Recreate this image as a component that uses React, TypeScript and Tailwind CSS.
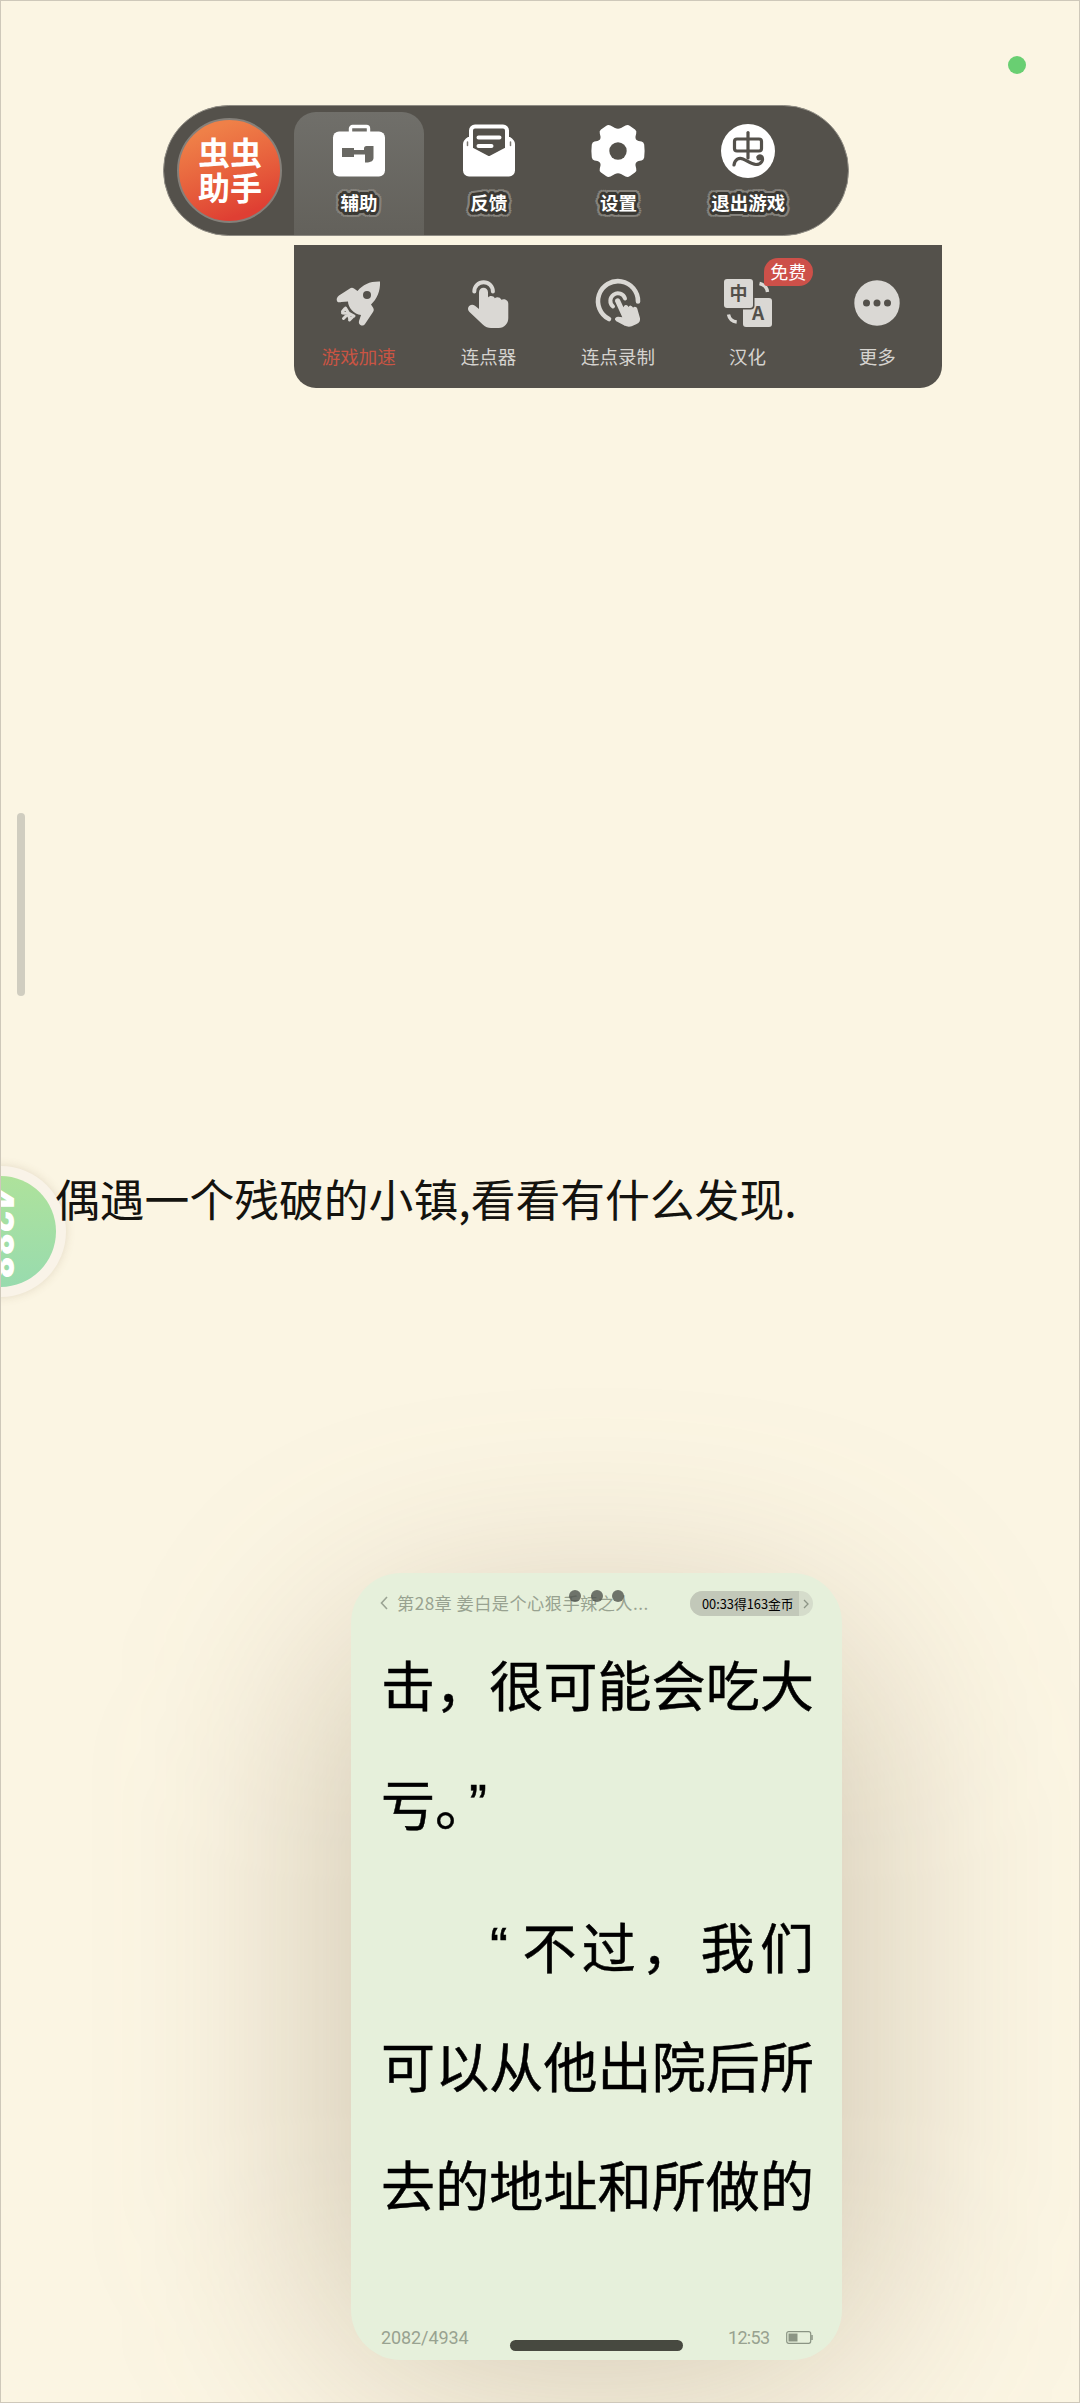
import type { ReactNode } from "react";

function ToolboxIcon() {
  return (
    <svg viewBox="0 0 54 54" className="h-[54px] w-[54px]">
      <path d="M18.500 9V4.500a2 2 0 0 1 2-2h14a2 2 0 0 1 2 2V9" fill="none" stroke="#fff" strokeWidth="3.400" />
      <rect x="1" y="7.500" width="52" height="45" rx="6" fill="#fff" />
      <path d="M10 24h12v2h10v-1.500a2.500 2.500 0 0 1 2.500-2.500H41.500v12c0 3-3 4.500-7.500 4.500h-1v-8H22v2.500H10z" fill="#696863" />
    </svg>
  );
}

function FeedbackIcon() {
  return (
    <svg viewBox="0 0 54 54" className="h-[54px] w-[54px]">
      <path d="M1 20c0-3 2-5 5-7h42c3 2 5 4 5 7v26.500a6 6 0 0 1-6 6H7a6 6 0 0 1-6-6z" fill="#fff" />
      <path d="M9 25V6.500a4 4 0 0 1 4-4h28a4 4 0 0 1 4 4V25l-18 9.500z" fill="#54514b" stroke="#fff" strokeWidth="4" strokeLinejoin="round" />
      <path d="M16.500 13.500h21M16.500 22h13" stroke="#fff" strokeWidth="4" strokeLinecap="round" />
      <path d="M5.500 18v3.500M48.500 18v3.500" stroke="#7b7872" strokeWidth="1.500" strokeLinecap="round" />
    </svg>
  );
}

function GearIcon() {
  return (
    <svg viewBox="0 0 54 54" className="h-[54px] w-[54px]">
      <path
        d="M15 2q2-1.500 4.500-.5L24 4q3 1.300 6 0l4.500-2.500Q37 .5 39 2l5 3.500q2 1.500 1.200 4l-.7 3q-.5 3.500 3 4.500l3 .6q2.200.7 2.700 3 .8 6.400 0 12.800-.5 2.300-2.700 3l-3 .6q-3.500 1-3 4.500l.7 3q.8 2.500-1.200 4L39 52q-2 1.500-4.500.5L30 50q-3-1.300-6 0l-4.500 2.500Q17 53.500 15 52l-5-3.500q-2-1.500-1.200-4l.7-3q.5-3.500-3-4.500l-3-.6q-2.200-.7-2.700-3-.8-6.400 0-12.800.5-2.300 2.700-3l3-.6q3.500-1 3-4.500l-.7-3Q8 7 10 5.500z"
        fill="#fff"
      />
      <circle cx="27" cy="27" r="8.700" fill="#54514b" />
    </svg>
  );
}

function ExitIcon() {
  return (
    <svg viewBox="0 0 54 54" className="h-[54px] w-[54px]">
      <circle cx="27" cy="27" r="27" fill="#fff" />
      <g fill="none" stroke="#54514b" strokeWidth="3.200" strokeLinecap="round" strokeLinejoin="round">
        <rect x="13.500" y="15" width="27" height="12" rx="2.500" />
        <path d="M27 8.500V34" />
        <path d="M13 41c1-6 5-7.500 9-6s8 5.500 13 5.500c5.500 0 7.500-4.500 6-7.500-1-1.500-3-1.500-4 0" />
      </g>
      <circle cx="38" cy="34" r="2.500" fill="#54514b" />
    </svg>
  );
}

function RocketIcon() {
  return (
    <svg viewBox="0 0 48 48" className="h-12 w-12">
      <path
        d="M45 2.500c-10-.3-17 3-22.500 9.500L19 9.500c-1.500-1-3-.8-4.500.2L4 16.500C2 18 1 20.500 2.200 22.500c1 1.200 3 .8 4.300.5l6.500-.5c0 6 6 13 13 13.500L24 42c-.5 2 .3 4 2.300 4.500 1.500.4 2.700-.3 3.700-1.500l8-12c1-1.500 1-3 0-4.500l-2-3C42 20 45.500 12 45 2.500z"
        fill="#dad8d4"
      />
      <circle cx="32" cy="16" r="4" fill="#54514b" />
      <path
        d="M10.500 29l3 5 5.500 3M10 29.500l-2.500 3M7.500 34l5.500.5 2 6M8.500 39.500l4-4M18 37.500L14.500 41"
        fill="none"
        stroke="#dad8d4"
        strokeWidth="3"
        strokeLinecap="round"
        strokeLinejoin="round"
      />
    </svg>
  );
}

function TapIcon() {
  return (
    <svg viewBox="0 0 48 54" className="ml-0.5 h-[54px] w-12">
      <path d="M9.300 15.500a9.300 9.300 0 1 1 18.600 0" fill="none" stroke="#dad8d4" strokeWidth="4" strokeLinecap="round" />
      <path
        d="M14 16.300a4.500 4.500 0 0 1 9 0V21.500c1.500-2.300 5.800-2 6.800.8 1.800-1.700 5.500-1.200 6.500 1.500 2.500-1.500 7-.3 7 4V42c0 5.500-4 10-9.500 10H26c-3 0-5.500-1-8-3.200L4.500 36c-4-4 1-9.500 5.500-6.200l4 3.200z"
        fill="#dad8d4"
      />
    </svg>
  );
}

function RecordIcon() {
  return (
    <svg viewBox="0 0 54 54" className="h-[54px] w-[54px]">
      <g fill="none" stroke="#dad8d4" strokeLinecap="round">
        <path d="M18 43A20 20 0 1 1 47 25.500" strokeWidth="4.600" />
        <path d="M22 30.500A7.500 7.500 0 1 1 34 22.500" strokeWidth="4" />
      </g>
      <path
        d="M23.500 26c-1.500-4 4.500-6.500 6.200-2.500l2.800 6c1-1.800 4-1.500 5 .2 1.300-1.500 3.800-1 4.800.8 1.500-1.200 4-.3 4.700 1.700L49.500 41c1.500 4-.5 6.500-4 8l-4 1.800c-3 1.200-5.500 1-8.500-.5L25 46c-4-2.500-1-6.500 2.500-6l2.500.3z"
        fill="#dad8d4"
        stroke="#54514b"
        strokeWidth="1.600"
      />
    </svg>
  );
}

function TranslateIcon() {
  return (
    <svg viewBox="0 0 50 50" className="h-[50px] w-[50px]">
      <rect x="20" y="20" width="29" height="29" rx="3" fill="#dad8d4" />
      <rect x="0" y="0" width="31.500" height="31.500" rx="4" fill="#54514b" />
      <rect x="1" y="1" width="29" height="29" rx="3" fill="#dad8d4" />
      <path d="M36.500 5.500c4.500 1 7.500 4 8 8.500M5.500 36.500c.8 4 3.700 7 8.200 7.500" fill="none" stroke="#dad8d4" strokeWidth="3.400" />
      <text x="15.500" y="22" textAnchor="middle" fontSize="18" fontWeight="700" fill="#54514b" fontFamily="Noto Sans CJK SC, sans-serif">中</text>
      <text x="35" y="42" textAnchor="middle" fontSize="19" fontWeight="700" fill="#54514b" fontFamily="Noto Sans CJK SC, sans-serif">A</text>
    </svg>
  );
}

function MoreIcon() {
  return (
    <svg viewBox="0 0 46 46" className="h-[46px] w-[46px]">
      <circle cx="23" cy="23" r="22.700" fill="#dad8d4" />
      <circle cx="12.500" cy="23" r="3.500" fill="#54514b" />
      <circle cx="23" cy="23" r="3.500" fill="#54514b" />
      <circle cx="33.500" cy="23" r="3.500" fill="#54514b" />
    </svg>
  );
}

const tabs: { label: string; icon: ReactNode; active?: boolean }[] = [
  { label: "辅助", icon: <ToolboxIcon />, active: true },
  { label: "反馈", icon: <FeedbackIcon /> },
  { label: "设置", icon: <GearIcon /> },
  { label: "退出游戏", icon: <ExitIcon /> },
];

const tools: { label: string; icon: ReactNode; active?: boolean; badge?: string }[] = [
  { label: "游戏加速", icon: <RocketIcon />, active: true },
  { label: "连点器", icon: <TapIcon /> },
  { label: "连点录制", icon: <RecordIcon /> },
  { label: "汉化", icon: <TranslateIcon />, badge: "免费" },
  { label: "更多", icon: <MoreIcon /> },
];

// Rings of hard shadows: a dark inner outline with a grey one outside it.
function ring(radius: number, color: string) {
  return Array.from({ length: 16 }, (_, i) => {
    const angle = (i * Math.PI) / 8;
    return `${(radius * Math.cos(angle)).toFixed(2)}px ${(radius * Math.sin(angle)).toFixed(2)}px 0 ${color}`;
  }).join(",");
}

const outline = [ring(1.5, "#3a3833"), ring(2.8, "#3a3833"), ring(5.2, "#85827c")].join(",");

function Toolbar() {
  return (
    <nav className="ml-[162px] flex h-[131px] w-[686px] rounded-full border border-[#8f8c84] bg-[#54514b]">
      <div className="mt-3 ml-[12.500px] flex h-[105px] w-[105px] items-center justify-center rounded-full border-2 border-[#85807a] bg-linear-160 from-[#ef8048] from-15% to-[#df3f33] to-85% pb-1 pl-0.5 text-center text-[32px] leading-[35px] font-bold text-white">
        <span>
          虫虫
          <br />
          助手
        </span>
      </div>
      <div className="ml-[12.500px] flex">
        {tabs.map((tab) => (
          <button
            key={tab.label}
            type="button"
            className={`mt-1.5 flex w-[129.800px] flex-col items-center rounded-t-[22px] pt-3 ${
              tab.active ? "bg-linear-to-b from-[#706f6a] to-[#63615b]" : ""
            }`}
          >
            {tab.icon}
            <span className="mt-[11px] text-[18.500px] leading-[26px] font-bold whitespace-nowrap text-white" style={{ textShadow: outline }}>
              {tab.label}
            </span>
          </button>
        ))}
      </div>
    </nav>
  );
}

function ToolPanel() {
  return (
    <div className="mt-[9px] ml-[293px] flex h-[143px] w-[648px] rounded-b-[22px] bg-[#54514b]">
      {tools.map((tool) => (
        <button key={tool.label} type="button" className="relative flex flex-1 flex-col items-center pt-[31px]">
          <span className="flex h-[54px] items-center">{tool.icon}</span>
          <span className={`mt-[13px] text-[18.500px] leading-[26px] ${tool.active ? "text-[#c95443]" : "text-[#d5d3cf]"}`}>{tool.label}</span>
          {tool.badge ? (
            <span className="absolute top-[13px] left-[81px] h-7 w-[49px] rounded-[14px] rounded-bl-[3px] bg-[#cd5049] text-center text-[18px] leading-[27px] text-white">
              {tool.badge}
            </span>
          ) : null}
        </button>
      ))}
    </div>
  );
}

function StoryLine() {
  return (
    <div className="mt-[765px] flex h-[160px] items-start">
      <div className="-ml-[66px] mt-[13px] h-[131px] w-[131px] shrink-0 rounded-full bg-[#f9f3e8] p-[10px] shadow-[0_0_10px_rgba(120,100,60,0.18)]">
        <div className="flex h-full w-full items-center justify-center rounded-full bg-linear-to-b from-[#aee29b] to-[#98dbae]">
          <span className="mt-1 font-['Inter',sans-serif] text-[34px] leading-none font-black text-white [writing-mode:vertical-rl]">4288</span>
        </div>
      </div>
      <p className="-ml-[11px] mt-[10px] text-[44.800px] leading-[70px] whitespace-nowrap text-[#14130f]">偶遇一个残破的小镇,看看有什么发现.</p>
    </div>
  );
}

const ROW = "flex h-[118.600px] items-center justify-between";

function Chars({ text }: { text: string }) {
  return (
    <>
      {Array.from(text).map((char, index) => (
        <span key={index}>{char}</span>
      ))}
    </>
  );
}

function BookText() {
  return (
    <div className="mr-[28px] ml-[30px] -mt-[8px] text-[54px] leading-none text-black [-webkit-text-stroke:0.5px_#000]">
      <div className={ROW}>
        <Chars text="击，很可能会吃大" />
      </div>
      <div className="flex h-[118.600px] items-center">
        <span>亏</span>
        <span className="w-[34px]">。</span>
        <span className="font-['Liberation_Sans',sans-serif]">”</span>
      </div>
      <div className={`${ROW} mt-[25px] pl-[109px]`}>
        <span className="w-[27px] font-['Liberation_Sans',sans-serif]">“</span>
        <Chars text="不过，我们" />
      </div>
      <div className={ROW}>
        <Chars text="可以从他出院后所" />
      </div>
      <div className={ROW}>
        <Chars text="去的地址和所做的" />
      </div>
    </div>
  );
}

function ReaderWindow() {
  return (
    <div className="relative mt-[260px] ml-[350px] h-[787px] w-[491px]">
      <div className="absolute -inset-x-8 top-10 -bottom-6 rounded-[160px] bg-[#6e5a3c]/28 blur-[105px]" />
      <article className="relative flex h-full w-full flex-col rounded-[50px] bg-[#e6f0db]">
        <header className="flex h-[60px] items-center pl-[29px]">
          <svg viewBox="0 0 8 14" className="h-3.5 w-2">
            <path d="M7 1 1.500 7 7 13" fill="none" stroke="#9aa393" strokeWidth="1.600" />
          </svg>
          <h1 className="ml-[9px] w-[270px] text-[17.200px] leading-6 tracking-[0.45px] whitespace-nowrap text-[#98a290]">第28章 姜白是个心狠手辣之人...</h1>
          <div className="ml-[23px] flex h-[25px] w-[123px] overflow-hidden rounded-full bg-[#d5dccb] text-black">
            <span className="w-[109px] bg-[#c2c8b9] pl-3 text-[12.800px] leading-[25px] whitespace-nowrap">00:33得163金币</span>
            <svg viewBox="0 0 6 10" className="mt-2 ml-1 h-2.5 w-1.5">
              <path d="M1 1l4 4-4 4" fill="none" stroke="#8c9485" strokeWidth="1.300" />
            </svg>
          </div>
        </header>
        <div className="absolute top-[17px] left-[218px] flex gap-[9.500px]">
          <i className="h-3 w-3 rounded-full bg-[#50544d]/80" />
          <i className="h-3 w-3 rounded-full bg-[#50544d]/80" />
          <i className="h-3 w-3 rounded-full bg-[#50544d]/80" />
        </div>
        <BookText />
        <footer className="mt-auto flex h-[46px] items-center pr-[29px] pl-[30px] font-['Roboto',sans-serif] text-[18px] text-[#98a290]">
          <span className="w-[86px] tracking-[-0.1px]">2082/4934</span>
          <span className="mt-[17px] ml-[43px] h-[11px] w-[173px] rounded-full bg-[#474940]" />
          <span className="ml-[45px] tracking-[-0.7px]">12:53</span>
          <svg viewBox="0 0 27 13" className="ml-auto h-[13px] w-[27px]">
            <rect x="0.700" y="0.700" width="24" height="11.600" rx="2" fill="none" stroke="#8b9584" strokeWidth="1.200" />
            <rect x="2.500" y="2.500" width="9" height="8" fill="#8b9584" />
            <path d="M26 4v5" stroke="#8b9584" strokeWidth="1.500" />
          </svg>
        </footer>
      </article>
    </div>
  );
}

export default function App() {
  return (
    <main className="relative h-[2403px] w-[1080px] overflow-hidden border border-[#cec8ba] bg-[#fbf5e3] pt-[104px] font-['Noto_Sans_CJK_SC',sans-serif]">
      <span className="absolute top-[55px] left-[1007px] h-[18px] w-[18px] rounded-full bg-[#69cf72]" />
      <span className="absolute top-[812px] left-[16px] h-[183px] w-2 rounded-full bg-[#d0cdc0]" />
      <Toolbar />
      <ToolPanel />
      <StoryLine />
      <ReaderWindow />
    </main>
  );
}
